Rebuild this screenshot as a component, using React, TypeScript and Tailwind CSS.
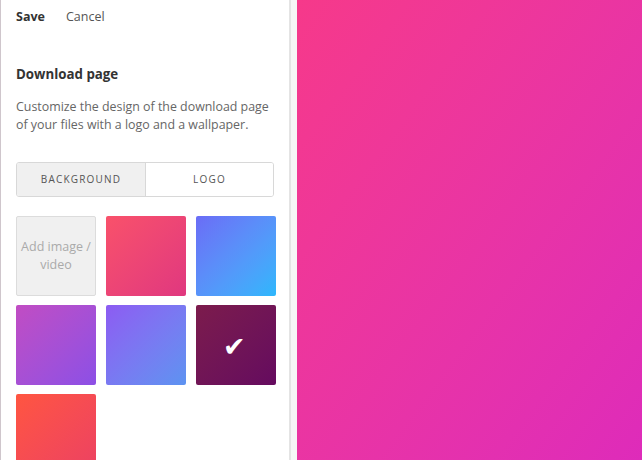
const tiles = [
  "bg-gradient-to-br from-[#f9516a] to-[#e0377f]",
  "bg-gradient-to-br from-[#6a6cf6] to-[#2bb7fc]",
  "bg-gradient-to-br from-[#c14cc3] to-[#8c4fe6]",
  "bg-gradient-to-br from-[#8c5bf2] to-[#5c93f1]",
  "bg-gradient-to-br from-[#7c1b4c] to-[#650a5f]",
  "bg-gradient-to-br from-[#ff5540] to-[#ec4162]",
]

export default function App() {
  return (
    <div className="flex h-[460px] w-[642px] overflow-hidden bg-white font-['Open_Sans',sans-serif]">
      {/* ================= SIDE PANEL ================= */}
      <div className="flex w-[291px] shrink-0 flex-col border-l border-r-2 border-l-[#cfc6cc] border-r-[#e4e4e4] bg-white pl-[15px] pr-[15px]">
        <div className="flex shrink-0 items-center gap-[21px] pt-[8px] text-[12.5px] leading-[18px]">
          <button className="font-bold text-[#333]">Save</button>
          <button className="text-[#555]">Cancel</button>
        </div>

        <h2 className="mt-[38px] shrink-0 text-[13.3px] font-bold leading-[20px] text-[#333]">Download page</h2>
        <p className="mt-[14px] shrink-0 text-[12.4px] leading-[18px] text-[#666]">
          Customize the design of the download page of your files with a logo and a wallpaper.
        </p>

        {/* tabs */}
        <div className="mt-[28px] flex h-[35px] w-[258px] shrink-0 overflow-hidden rounded-[3px] border border-[#d8d8d8] text-[10px] font-medium tracking-[0.12em] text-[#555]">
          <div className="flex w-[129px] items-center justify-center border-r border-[#d8d8d8] bg-[#f0f0f0]">BACKGROUND</div>
          <div className="flex flex-1 items-center justify-center bg-white">LOGO</div>
        </div>

        {/* backgrounds */}
        <div className="mt-[19px] grid shrink-0 grid-cols-[80px_80px_80px] gap-x-[10px] gap-y-[9px]">
          <div className="flex h-[80px] items-center justify-center rounded-[2px] border border-[#dcdcdc] bg-[#f0f0f0] text-center text-[12.5px] leading-[18px] text-[#aaa]">
            Add image /<br />video
          </div>
          {tiles.map((cls, i) => (
            <div key={i} className={`flex h-[80px] items-center justify-center rounded-[2px] ${cls}`}>
              {i === 4 && <span className="-ml-[3px] text-[27px] leading-none text-white">✔</span>}
            </div>
          ))}
        </div>
      </div>

      {/* light gap */}
      <div className="w-[6px] shrink-0 bg-[#f6f6f6]" />

      {/* ================= PREVIEW ================= */}
      <div className="flex-1 bg-gradient-to-br from-[#f6398a] to-[#de2bba]" />
    </div>
  )
}
